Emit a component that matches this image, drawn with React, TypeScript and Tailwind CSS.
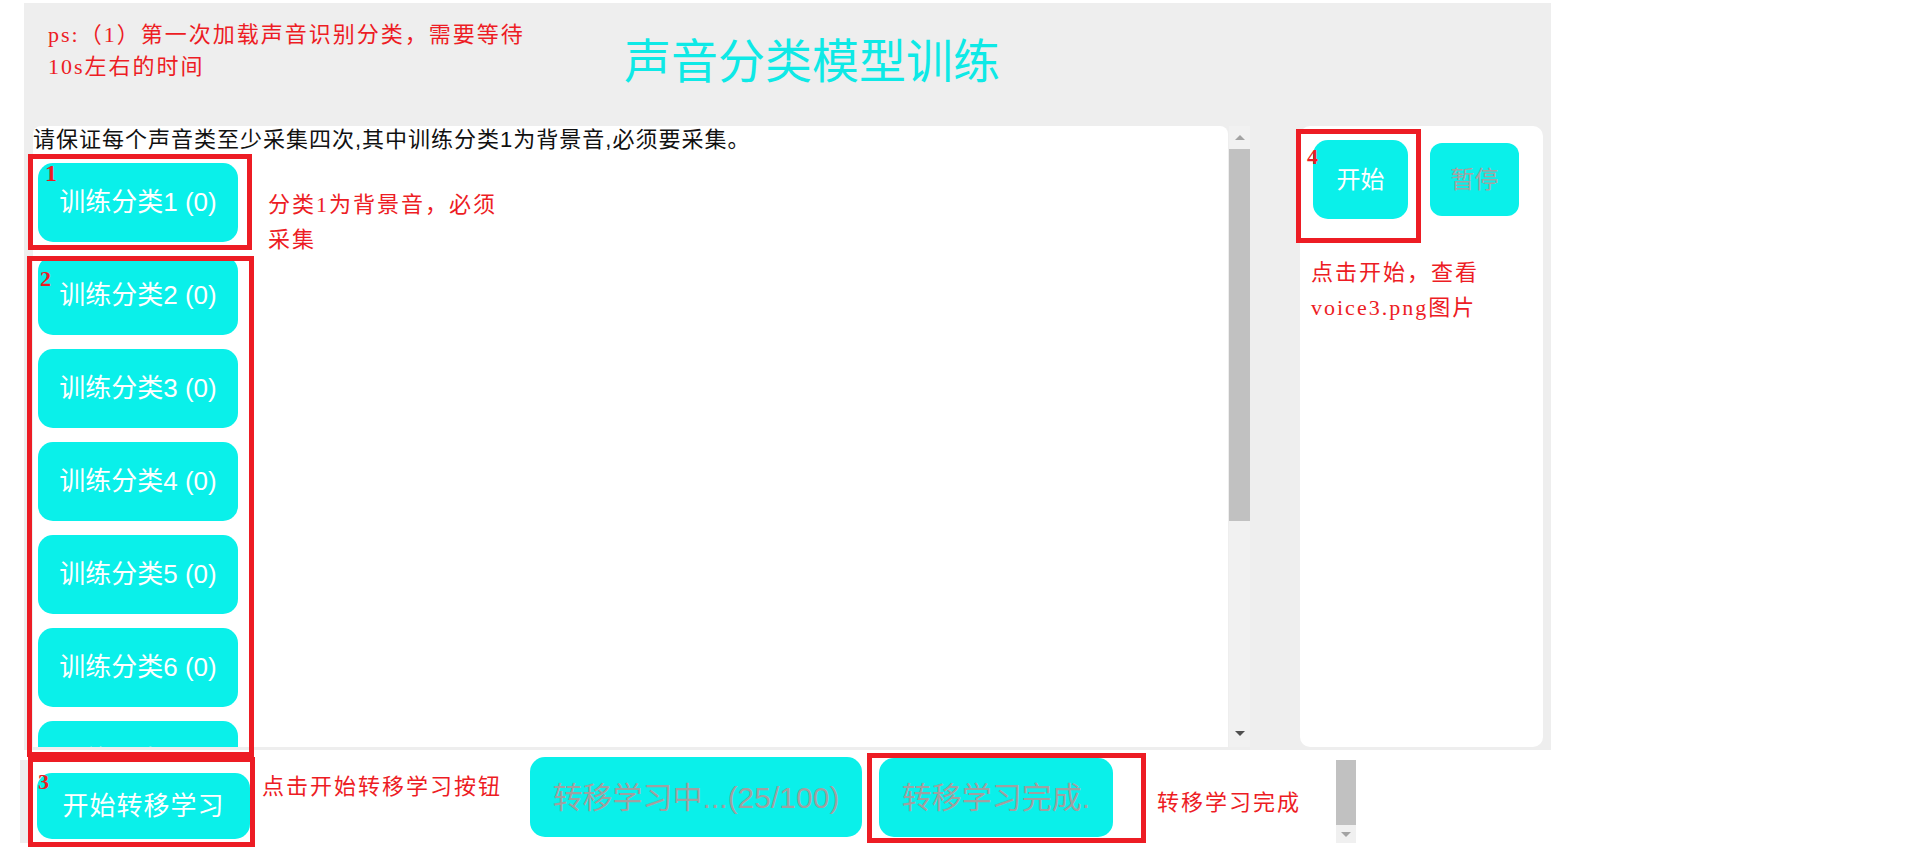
import React from 'react';

const sans = "font-['Liberation_Sans','Noto_Sans_CJK_SC',sans-serif]";
const note = "font-['Liberation_Serif','Noto_Sans_CJK_SC',serif] text-[#ed1c24]";

const Mark = ({ className }: { className: string }) => (
    <div className={`absolute border-[5px] border-[#ed1c24] pointer-events-none ${className}`} />
);

const Num = ({ className, children }: { className: string; children: React.ReactNode }) => (
    <span className={`absolute font-['Liberation_Serif',serif] font-bold text-[#ed1c24] leading-none ${className}`}>
        {children}
    </span>
);

const ClassButton = ({ n }: { n: number }) => (
    <button className="w-[200px] h-[79px] shrink-0 rounded-[15px] bg-[#0af0ea] text-white text-[26px]">
        训练分类{n} (0)
    </button>
);

export default function App() {
    return (
        <div className={`relative w-[1914px] h-[852px] bg-white overflow-hidden ${sans}`}>
            {/* Main area */}
            <div className="ml-[24px] mt-[3px] w-[1527px] h-[747px] bg-[#eeeeee] flex flex-col">
                {/* Header */}
                <div className="h-[123px] shrink-0 flex items-start">
                    <div className={`ml-[24px] mt-[16px] w-[510px] text-[22px] leading-[32px] tracking-[2px] ${note}`}>
                        ps:（1）第一次加载声音识别分类，需要等待
                        <br />
                        10s左右的时间
                    </div>
                    <h1 className="ml-[66px] mt-[31px] text-[47px] leading-[55px] font-normal text-[#0ee9e6]">
                        声音分类模型训练
                    </h1>
                </div>

                {/* Body */}
                <div className="flex h-[621px] pl-[9px]">
                    <div className="w-[1195px] h-full bg-white rounded-t-[8px] overflow-hidden">
                        <p className="text-[22px] leading-[28px] tracking-[1px] text-[#111]">
                            请保证每个声音类至少采集四次,其中训练分类1为背景音,必须要采集。
                        </p>
                        <div className="mt-[9px] pl-[5px] flex flex-col gap-[14px]">
                            <div className="flex items-start h-[79px]">
                                <ClassButton n={1} />
                                <div className={`ml-[30px] mt-[24px] text-[22px] leading-[35px] tracking-[2px] ${note}`}>
                                    分类1为背景音，必须
                                    <br />
                                    采集
                                </div>
                            </div>
                            {[2, 3, 4, 5, 6, 7].map((n) => (
                                <ClassButton key={n} n={n} />
                            ))}
                        </div>
                    </div>

                    {/* Scrollbar */}
                    <div className="ml-[1px] w-[21px] h-full flex flex-col bg-[#f1f1f1]">
                        <div className="h-[23px] flex items-center justify-center">
                            <div className="w-0 h-0 border-x-[5px] border-x-transparent border-b-[5px] border-b-[#a3a3a3]" />
                        </div>
                        <div className="h-[372px] bg-[#c1c1c1]" />
                        <div className="flex-1" />
                        <div className="h-[22px] flex items-start justify-center pt-[6px]">
                            <div className="w-0 h-0 border-x-[5px] border-x-transparent border-t-[5px] border-t-[#505050]" />
                        </div>
                    </div>

                    {/* Right panel */}
                    <div className="ml-[50px] w-[243px] h-full bg-white rounded-[10px]">
                        <div className="flex items-start pl-[13px] pt-[14px] gap-[22px]">
                            <button className="w-[95px] h-[79px] rounded-[15px] bg-[#0af0ea] text-white text-[24px]">
                                开始
                            </button>
                            <button className="mt-[3px] w-[89px] h-[73px] rounded-[12px] bg-[#0af0ea] text-[#a3a3a3] text-[24px]">
                                暂停
                            </button>
                        </div>
                        <div className={`pl-[11px] mt-[36px] text-[22px] leading-[35px] tracking-[2px] ${note}`}>
                            点击开始，查看
                            <br />
                            voice3.png图片
                        </div>
                    </div>
                </div>
            </div>

            {/* Bottom row */}
            <div className="flex items-start h-[102px]">
                <div className="ml-[20px] mt-[10px] w-[8px] h-[83px] bg-[#eeeeee]" />
                <button className="ml-[9px] mt-[23px] w-[213px] h-[66px] rounded-[15px] bg-[#0af0ea] text-white text-[26px] tracking-[1px]">
                    开始转移学习
                </button>
                <div className={`ml-[12px] mt-[23px] w-[268px] text-[22px] leading-[28px] tracking-[2px] ${note}`}>
                    点击开始转移学习按钮
                </div>
                <button className="mt-[7px] w-[332px] h-[80px] rounded-[15px] bg-[#0af0ea] text-[#a0a0a0] text-[30px]">
                    转移学习中...(25/100)
                </button>
                <button className="ml-[17px] mt-[8px] w-[234px] h-[79px] rounded-[15px] bg-[#0af0ea] text-[#a0a0a0] text-[30px]">
                    转移学习完成.
                </button>
                <div className={`ml-[44px] mt-[39px] w-[179px] text-[22px] leading-[28px] tracking-[2px] ${note}`}>
                    转移学习完成
                </div>
                <div className="mt-[10px] w-[20px] h-[83px] flex flex-col">
                    <div className="h-[65px] bg-[#c1c1c1]" />
                    <div className="flex-1 bg-[#f0f0f0] flex items-center justify-center">
                        <div className="w-0 h-0 border-x-[5px] border-x-transparent border-t-[5px] border-t-[#a3a3a3]" />
                    </div>
                </div>
            </div>

            {/* Annotation boxes */}
            <Mark className="left-[28px] top-[154px] w-[224px] h-[96px]" />
            <Mark className="left-[27px] top-[256px] w-[227px] h-[501px]" />
            <Mark className="left-[28px] top-[757px] w-[227px] h-[90px]" />
            <Mark className="left-[1296px] top-[129px] w-[125px] h-[114px]" />
            <Mark className="left-[867px] top-[753px] w-[279px] h-[90px]" />

            <Num className="left-[45px] top-[161px] text-[24px]">1</Num>
            <Num className="left-[40px] top-[268px] text-[22px]">2</Num>
            <Num className="left-[38px] top-[771px] text-[22px]">3</Num>
            <Num className="left-[1307px] top-[146px] text-[22px]">4</Num>
        </div>
    );
}
